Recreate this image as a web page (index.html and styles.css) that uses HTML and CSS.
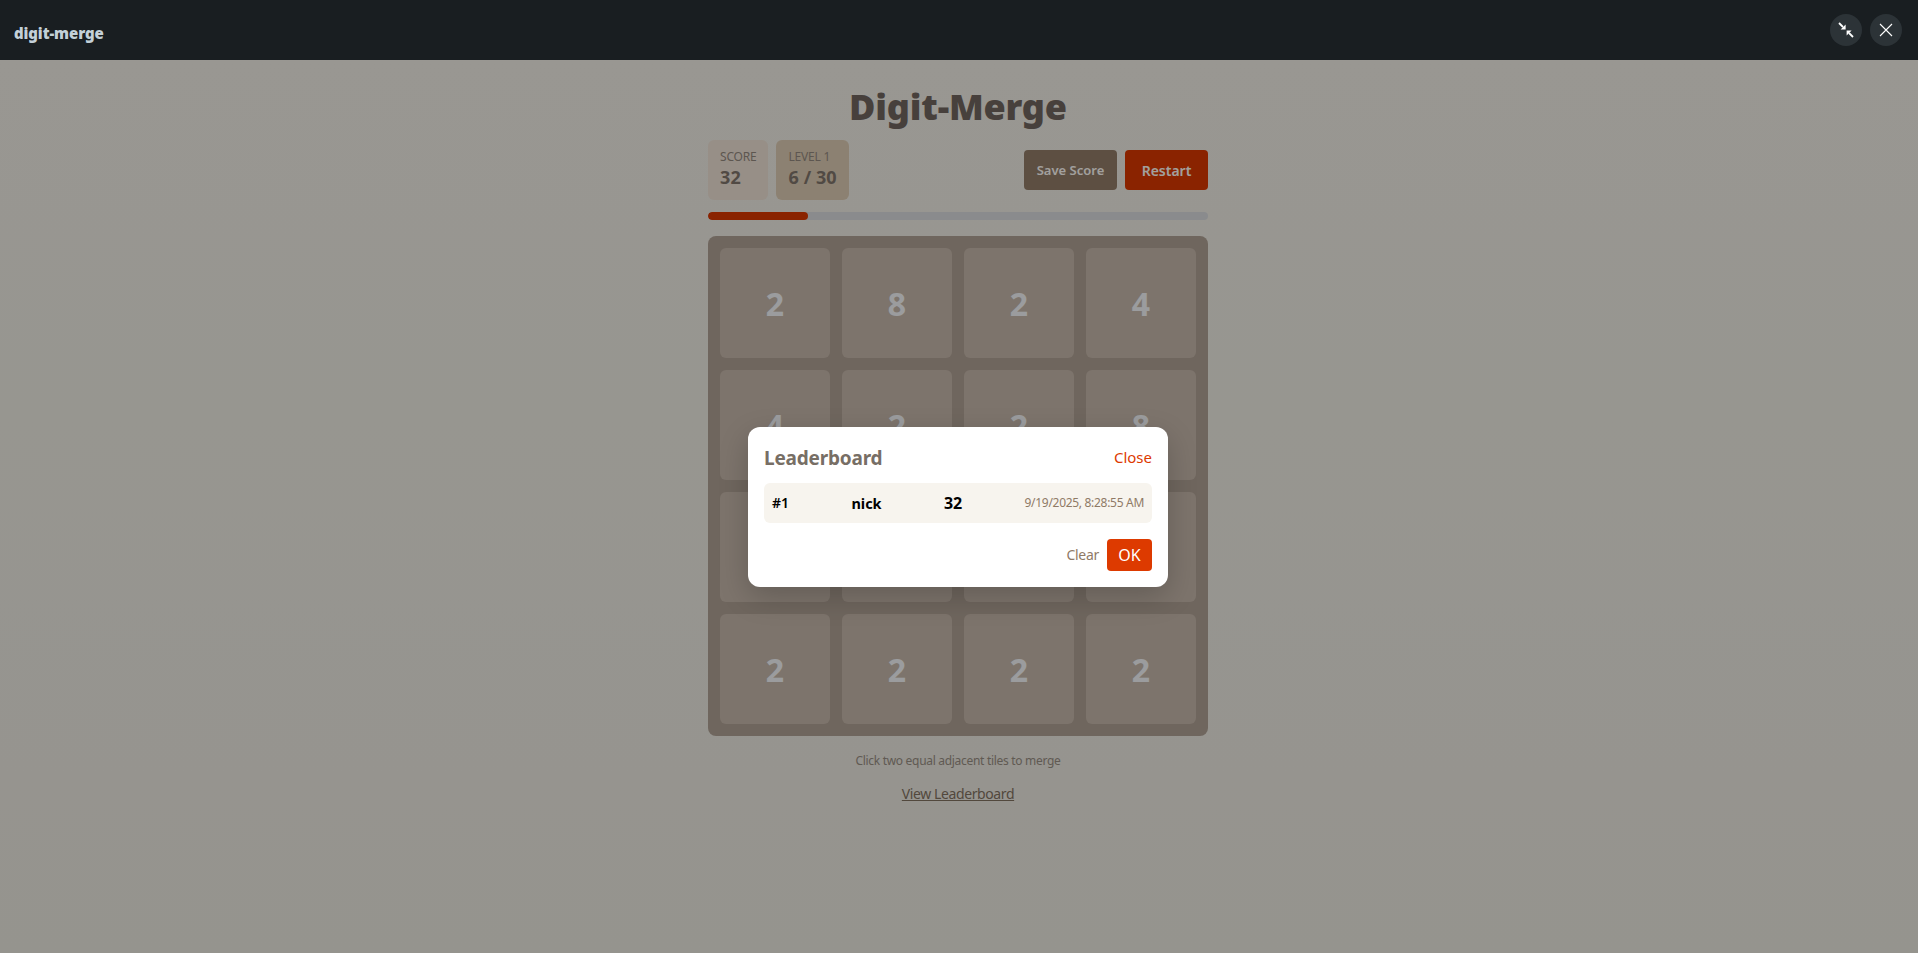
FILE: index.html
```html
<!DOCTYPE html>
<html lang="en">
<head>
<meta charset="utf-8">
<title>digit-merge</title>
<link rel="stylesheet" href="styles.css">
</head>
<body>
<header class="topbar">
  <span class="app-name">digit-merge</span>
  <div class="win-actions">
    <button class="round-btn" aria-label="Collapse">
      <svg width="16" height="16" viewBox="0 0 16 16" fill="none"><path d="M1 1 5 5" stroke="#fff" stroke-width="1.8"/><path d="M7.6 7.6V2.6L2.6 7.6Z" fill="#fff"/><path d="M15 15 11 11" stroke="#fff" stroke-width="1.8"/><path d="M8.6 8.6V13.6L13.6 8.6Z" fill="#fff"/></svg>
    </button>
    <button class="round-btn" aria-label="Close">
      <svg width="16" height="16" viewBox="0 0 16 16" fill="none"><path d="M2 2 14 14M14 2 2 14" stroke="#fff" stroke-width="1.1"/></svg>
    </button>
  </div>
</header>
<main class="stage">
  <div class="game">
    <h1 class="title">Digit-Merge</h1>
    <div class="toolbar">
      <div class="stats">
        <div class="stat stat-score"><div class="stat-label">SCORE</div><div class="stat-value">32</div></div>
        <div class="stat stat-level"><div class="stat-label">LEVEL 1</div><div class="stat-value">6 / 30</div></div>
      </div>
      <div class="actions">
        <button class="btn btn-save">Save Score</button>
        <button class="btn btn-restart">Restart</button>
      </div>
    </div>
    <div class="progress"><div class="progress-fill" style="width:20%"></div></div>
    <div class="board">
      <div class="tile">2</div><div class="tile">8</div><div class="tile">2</div><div class="tile">4</div>
      <div class="tile">4</div><div class="tile">2</div><div class="tile">2</div><div class="tile">8</div>
      <div class="tile">2</div><div class="tile">4</div><div class="tile">8</div><div class="tile">2</div>
      <div class="tile">2</div><div class="tile">2</div><div class="tile">2</div><div class="tile">2</div>
    </div>
    <p class="hint">Click two equal adjacent tiles to merge</p>
    <a class="board-link" href="#">View Leaderboard</a>
  </div>
  <div class="overlay">
    <div class="modal">
      <div class="modal-head">
        <h2 class="modal-title">Leaderboard</h2>
        <button class="link-close">Close</button>
      </div>
      <div class="score-row">
        <span class="rank">#1</span>
        <span class="name">nick</span>
        <span class="points">32</span>
        <span class="date">9/19/2025, 8:28:55 AM</span>
      </div>
      <div class="modal-foot">
        <button class="link-clear">Clear</button>
        <button class="btn-ok">OK</button>
      </div>
    </div>
  </div>
</main>
</body>
</html>
```
FILE: styles.css
```css
* { box-sizing: border-box; }
html, body { margin: 0; height: 100%; }
body {
  font-family: "Noto Sans", "Open Sans", sans-serif;
  background: #191e21;
  overflow: hidden;
  display: flex;
  flex-direction: column;
}
button { font-family: inherit; border: 0; cursor: pointer; }
.topbar {
  height: 60px;
  flex: none;
  background: #191e21;
  display: flex;
  align-items: center;
  justify-content: space-between;
  padding: 0 16px 0 14px;
}
.app-name {
  padding-top: 5px;
  font-weight: 900;
  font-size: 15px;
  letter-spacing: -0.1px;
  color: #c3d0d8;
}
.win-actions { display: flex; gap: 8px; }
.round-btn {
  width: 32px;
  height: 32px;
  border-radius: 50%;
  background: #2c3337;
  padding: 0;
  display: flex;
  align-items: center;
  justify-content: center;
}
.stage {
  flex: 1;
  position: relative;
  padding-right: 2px;
  background: linear-gradient(180deg, #ebe8e0, #e5e3db);
  display: flex;
  justify-content: center;
}
.game {
  width: 500px;
  display: flex;
  flex-direction: column;
  align-items: stretch;
}
.title {
  margin: 25px 0 0;
  height: 45px;
  line-height: 43px;
  font-size: 36px;
  font-weight: 900;
  letter-spacing: -0.2px;
  text-align: center;
  color: #6e635c;
}
.toolbar {
  margin-top: 10px;
  display: flex;
  justify-content: space-between;
  align-items: center;
}
.stats { display: flex; gap: 8px; }
.stat {
  height: 60px;
  border-radius: 6px;
  padding: 9px 12px;
}
.stat-score { background: #e8dcd0; }
.stat-level { background: #d8c7af; }
.stat-label { font-size: 12px; line-height: 16px; letter-spacing: -0.2px; color: #8f857b; }
.stat-value { font-size: 18px; line-height: 24px; font-weight: 700; letter-spacing: 0.1px; color: #7d7269; }
.actions { display: flex; gap: 8px; }
.btn {
  height: 40px;
  border-radius: 4px;
  color: #f9f6f2;
  font-weight: 600;
}
.btn-save { width: 93px; background: #8f7a66; font-size: 13px; padding: 0; }
.btn-restart { width: 83px; background: #d43600; font-size: 14px; padding: 0; }
.progress {
  margin-top: 12px;
  height: 8px;
  border-radius: 4px;
  background: #d4d6d9;
  overflow: hidden;
}
.progress-fill { height: 100%; border-radius: 4px; background: #d43600; }
.board {
  margin-top: 16px;
  height: 500px;
  padding: 12px;
  border-radius: 8px;
  background: #ab9d91;
  display: grid;
  grid-template-columns: repeat(4, 110px);
  grid-template-rows: repeat(4, 110px);
  gap: 12px;
}
.tile {
  border-radius: 6px;
  background: #c0b3a6;
  color: #eff0f3;
  font-size: 32px;
  font-weight: 700;
  display: flex;
  align-items: center;
  justify-content: center;
}
.hint {
  margin: 17px 0 0;
  text-align: center;
  font-size: 12px;
  line-height: 16px;
  letter-spacing: -0.3px;
  color: #948a80;
}
.board-link {
  margin: 15px auto 0;
  font-size: 14px;
  line-height: 19px;
  letter-spacing: -0.4px;
  color: #7f6f5e;
  text-decoration: underline;
}
.overlay {
  position: absolute;
  inset: 0;
  padding-right: 2px;
  background: rgba(0, 0, 0, .35);
  display: flex;
  align-items: center;
  justify-content: center;
}
.modal {
  width: 420px;
  height: 160px;
  padding: 16px;
  background: #fff;
  border-radius: 12px;
  box-shadow: 0 10px 30px rgba(0, 0, 0, .2);
}
.modal-head {
  display: flex;
  justify-content: space-between;
  align-items: center;
  height: 30px;
}
.modal-title { margin: 0; font-size: 19px; font-weight: 700; letter-spacing: -0.2px; color: #776e65; }
.link-close { background: none; padding: 0 0 2px; color: #dd3a00; font-size: 15px; }
.score-row {
  margin-top: 10px;
  height: 40px;
  padding: 0 8px;
  border-radius: 6px;
  background: #f7f4ee;
  display: flex;
  align-items: center;
  justify-content: space-between;
  font-size: 14.5px;
  font-weight: 700;
  color: #000;
}
.rank { font-size: 14px; font-weight: 600; }
.points { font-size: 16px; }
.date { font-size: 12px; font-weight: 400; letter-spacing: -0.3px; color: #8f7a66; }
.modal-foot {
  margin-top: 16px;
  display: flex;
  justify-content: flex-end;
  align-items: center;
  gap: 8px;
}
.link-clear { background: none; padding: 0; color: #8f7a66; font-size: 14px; letter-spacing: -0.3px; }
.btn-ok {
  width: 45px;
  height: 32px;
  border-radius: 4px;
  background: #dd3a00;
  color: #fff;
  font-size: 16px;
  padding: 0;
}
```
